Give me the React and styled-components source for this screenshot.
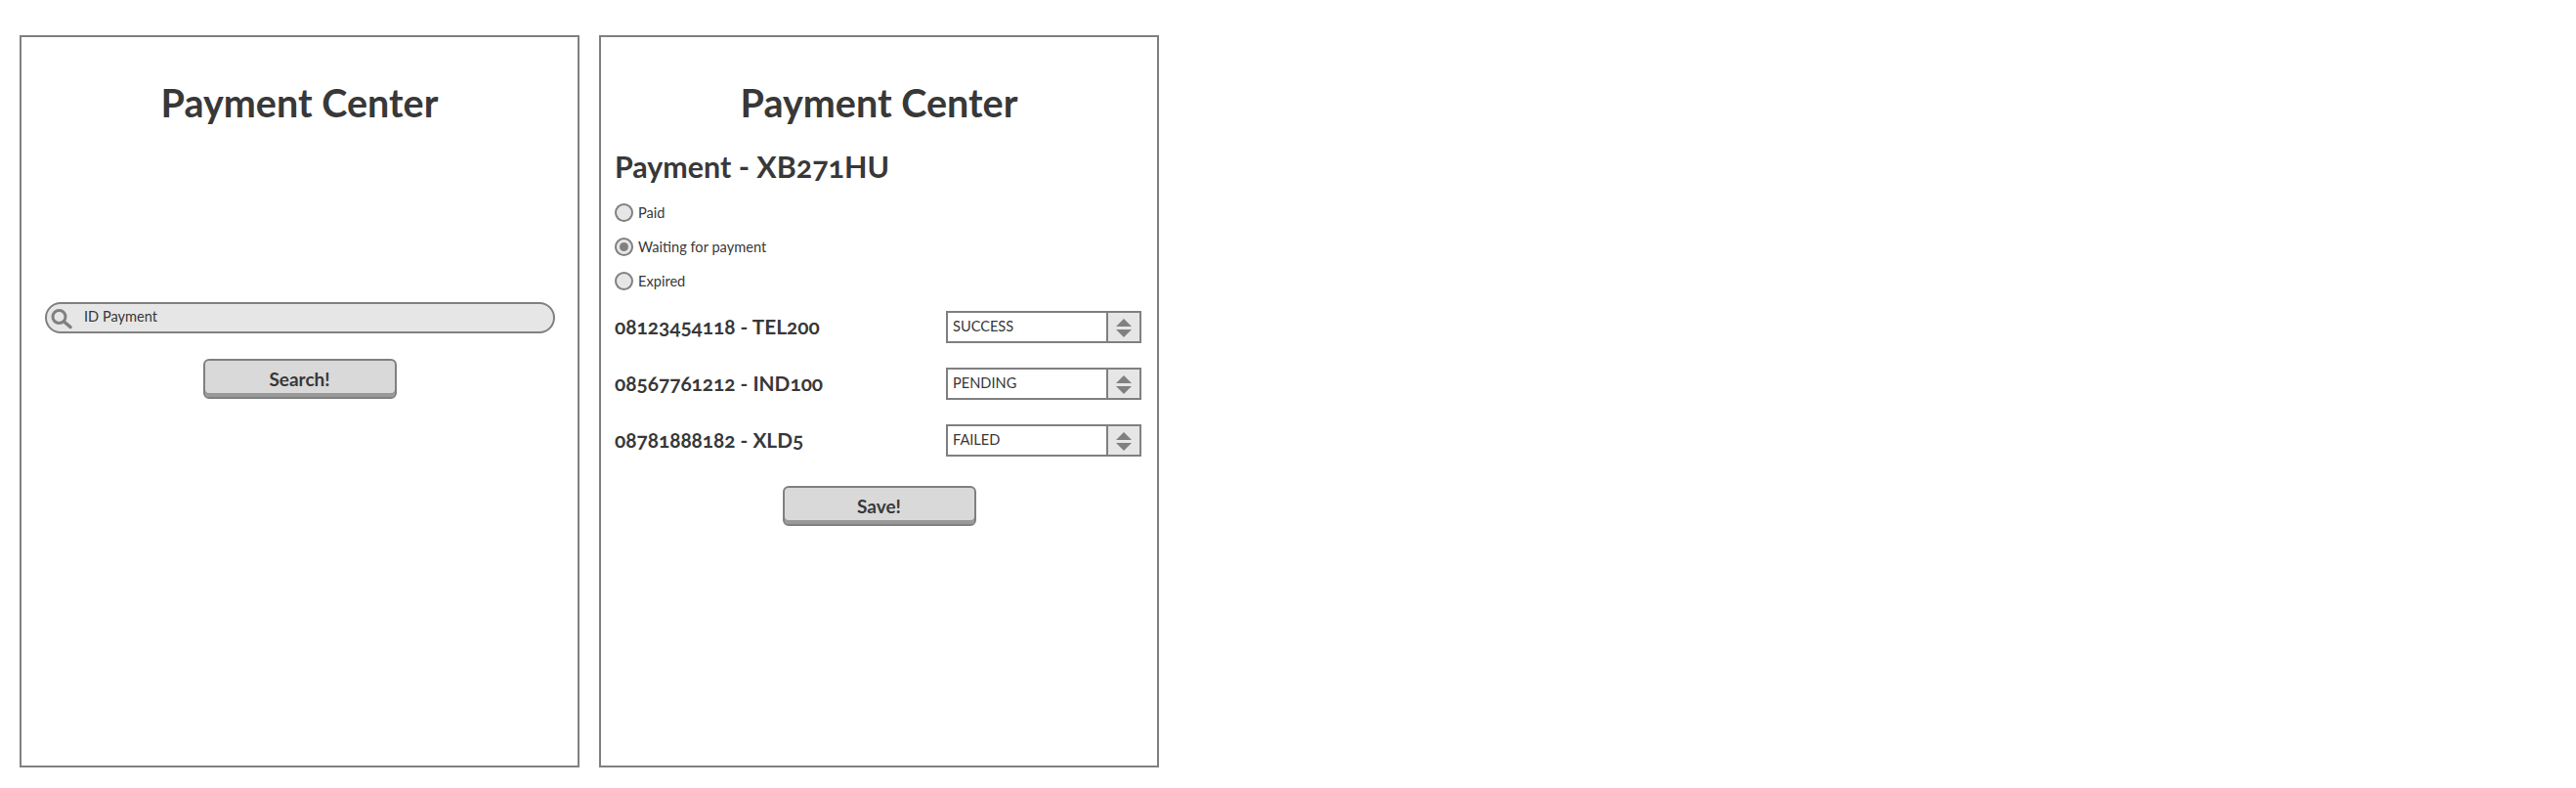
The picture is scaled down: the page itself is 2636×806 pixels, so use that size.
import React from "react";
import styled, { createGlobalStyle } from "styled-components";

const GlobalStyle = createGlobalStyle`
  html, body {
    margin: 0;
    padding: 0;
    background: #fff;
  }
  body {
    font-family: "Lato", "Open Sans", sans-serif;
    font-variant-numeric: oldstyle-nums;
    font-feature-settings: "onum" 1;
    color: #383838;
  }
`;

const Page = styled.div`
  width: 2636px;
  height: 806px;
  box-sizing: border-box;
  padding: 36px 0 0 20px;
  display: flex;
  align-items: flex-start;
  gap: 20px;
`;

const Panel = styled.section`
  width: 573px;
  height: 749px;
  box-sizing: border-box;
  border: 2px solid #808080;
  padding: 0 14px;
  display: flex;
  flex-direction: column;
`;

const Title = styled.h1`
  margin: 43px 0 0;
  font-size: 39.5px;
  line-height: 48px;
  font-weight: 700;
  text-align: center;
`;

const SearchBar = styled.div`
  margin: 180px 9px 0 10px;
  height: 32px;
  box-sizing: border-box;
  border: 2px solid #808080;
  border-radius: 16px;
  background: #e6e6e6;
  display: flex;
  align-items: center;
  padding: 0 0 0 4px;
  gap: 10px;
  font-size: 14.6px;

  span {
    padding-bottom: 3px;
  }
`;

const Button = styled.button`
  display: block;
  align-self: center;
  width: 198px;
  height: 41px;
  margin-top: ${(p) => p.$top}px;
  box-sizing: border-box;
  padding: 0;
  border: 2px solid #808080;
  border-radius: 6px;
  box-shadow: inset 0 -4px 0 #999;
  background: #d9d9d9;
  color: #383838;
  font-family: inherit;
  font-size: 19px;
  font-weight: 700;
`;

const Heading = styled.h2`
  margin: 22px 0 0;
  font-size: 30.4px;
  line-height: 38px;
  font-weight: 700;
`;

const RadioGroup = styled.div`
  margin-top: 19px;
  display: flex;
  flex-direction: column;
  gap: 16px;
`;

const RadioRow = styled.label`
  display: flex;
  align-items: center;
  gap: 5px;
  height: 19px;
  font-size: 14.6px;
`;

const RadioDot = styled.span`
  width: 19px;
  height: 19px;
  box-sizing: border-box;
  border: 2px solid #808080;
  border-radius: 50%;
  background: #e6e6e6;
  display: flex;
  align-items: center;
  justify-content: center;

  &::after {
    content: "";
    display: ${(p) => (p.$checked ? "block" : "none")};
    width: 9px;
    height: 9px;
    border-radius: 50%;
    background: #808080;
  }
`;

const Rows = styled.div`
  margin-top: 21px;
  display: flex;
  flex-direction: column;
  gap: 25px;
`;

const Row = styled.div`
  display: flex;
  align-items: center;
  justify-content: space-between;
  padding-right: 2px;
  height: 33px;
`;

const RowLabel = styled.div`
  font-size: 20.8px;
  font-weight: 700;
  padding-bottom: 3px;
`;

const Spinner = styled.div`
  width: 200px;
  height: 33px;
  box-sizing: border-box;
  border: 2px solid #808080;
  display: flex;
`;

const SpinnerValue = styled.div`
  flex: 1;
  padding: 0 0 3px 5px;
  display: flex;
  align-items: center;
  font-size: 14.6px;
`;

const SpinnerArrows = styled.div`
  width: 32px;
  border-left: 2px solid #808080;
  background: #e6e6e6;
  display: flex;
  align-items: center;
  justify-content: center;
`;

const SearchIcon = () => (
  <svg width="24" height="24" viewBox="0 0 24 24" fill="none" stroke="#808080">
    <circle cx="8.5" cy="11" r="6.5" strokeWidth="3" />
    <path d="M13.5 16 L20 21.5" strokeWidth="3.5" strokeLinecap="round" />
  </svg>
);

const ArrowsIcon = () => (
  <svg width="18" height="22" viewBox="0 0 18 22" fill="#808080">
    <path d="M9 2 L17 10 H1 Z" />
    <path d="M1 13 H17 L9 21 Z" />
  </svg>
);

const statuses = [
  { label: "Paid" },
  { label: "Waiting for payment", checked: true },
  { label: "Expired" },
];

const payments = [
  { id: "08123454118 - TEL200", status: "SUCCESS" },
  { id: "08567761212 - IND100", status: "PENDING" },
  { id: "08781888182 - XLD5", status: "FAILED" },
];

const App = () => (
  <Page>
    <GlobalStyle />
    <Panel>
      <Title>Payment Center</Title>
      <SearchBar>
        <SearchIcon />
        <span>ID Payment</span>
      </SearchBar>
      <Button $top={26}>Search!</Button>
    </Panel>
    <Panel>
      <Title>Payment Center</Title>
      <Heading>Payment - XB271HU</Heading>
      <RadioGroup>
        {statuses.map((s) => (
          <RadioRow key={s.label}>
            <RadioDot $checked={s.checked} />
            {s.label}
          </RadioRow>
        ))}
      </RadioGroup>
      <Rows>
        {payments.map((p) => (
          <Row key={p.id}>
            <RowLabel>{p.id}</RowLabel>
            <Spinner>
              <SpinnerValue>{p.status}</SpinnerValue>
              <SpinnerArrows>
                <ArrowsIcon />
              </SpinnerArrows>
            </Spinner>
          </Row>
        ))}
      </Rows>
      <Button $top={30}>Save!</Button>
    </Panel>
  </Page>
);

export default App;
